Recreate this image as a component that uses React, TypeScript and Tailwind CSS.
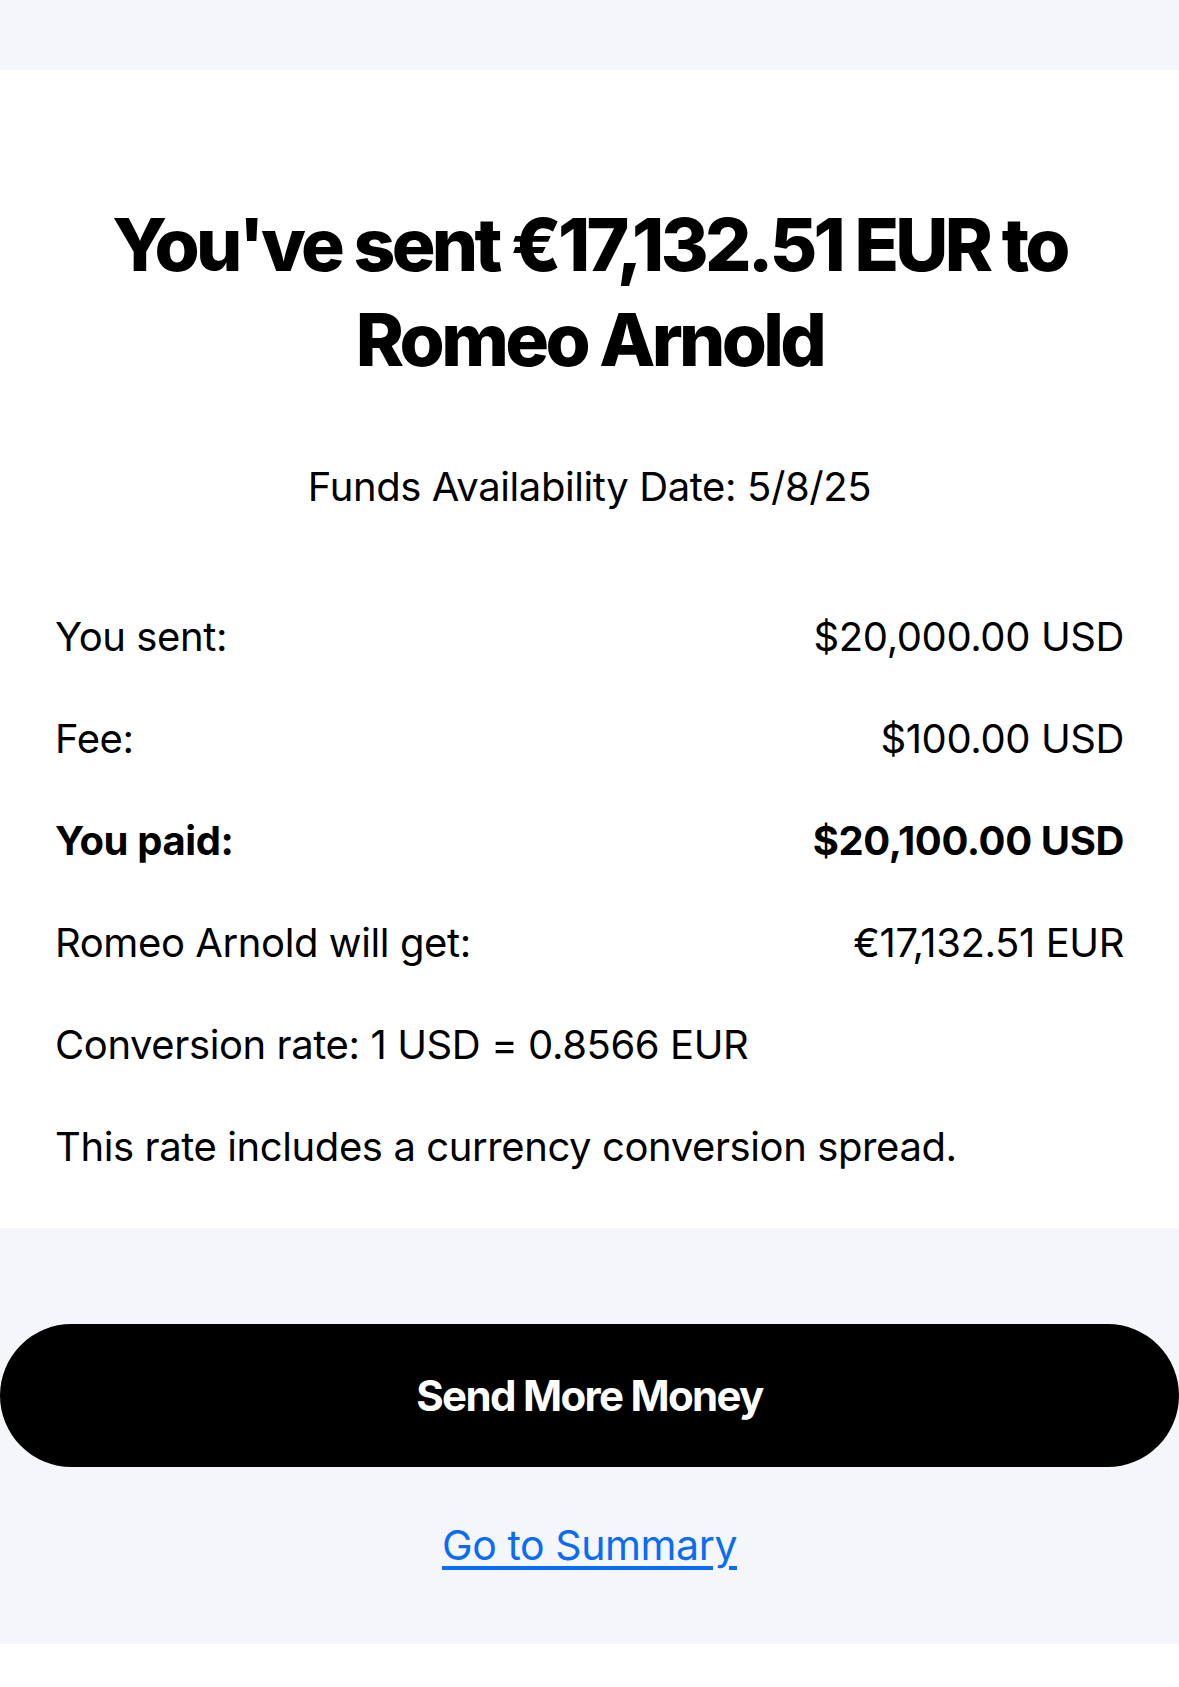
import React from 'react'

const rows = [
  { label: 'You sent:', value: '$20,000.00 USD' },
  { label: 'Fee:', value: '$100.00 USD' },
  { label: 'You paid:', value: '$20,100.00 USD', bold: true },
  { label: 'Romeo Arnold will get:', value: '€17,132.51 EUR' },
]

export default function App() {
  return (
    <div className="min-h-screen bg-white text-black font-['Inter','Liberation_Sans',sans-serif]">
      <div className="h-[70px] bg-[#f5f6fa]" />

      {/* confirmation */}
      <div className="bg-white px-[55px] pt-[127px] pb-[57px]">
        <h1 className="text-center text-[73px] leading-[95px] font-extrabold tracking-[-0.05em]">
          You've sent €17,132.51 EUR to
          <br />
          Romeo Arnold
        </h1>
        <p className="mt-[76px] text-center text-[40px] leading-[48px] tracking-[-0.01em]">
          Funds Availability Date: 5/8/25
        </p>

        <div className="mt-[102px] flex flex-col gap-[54px] text-[40px] leading-[48px] tracking-[-0.01em]">
          {rows.map((r) => (
            <div key={r.label} className={'flex justify-between ' + (r.bold ? 'font-bold' : '')}>
              <span>{r.label}</span>
              <span>{r.value}</span>
            </div>
          ))}
          <div>Conversion rate: 1 USD = 0.8566 EUR</div>
          <div>This rate includes a currency conversion spread.</div>
        </div>
      </div>

      {/* actions */}
      <div className="bg-[#f5f6fa] pt-[96px] pb-[75px] flex flex-col items-center">
        <button className="w-full h-[143px] rounded-full bg-black text-white text-[42px] font-bold tracking-[-0.04em]">
          Send More Money
        </button>
        <a href="#" className="mt-[54px] text-[41px] leading-[48px] tracking-[-0.01em] text-[#0a6cf5] underline underline-offset-[6px]">
          Go to Summary
        </a>
      </div>
    </div>
  )
}
